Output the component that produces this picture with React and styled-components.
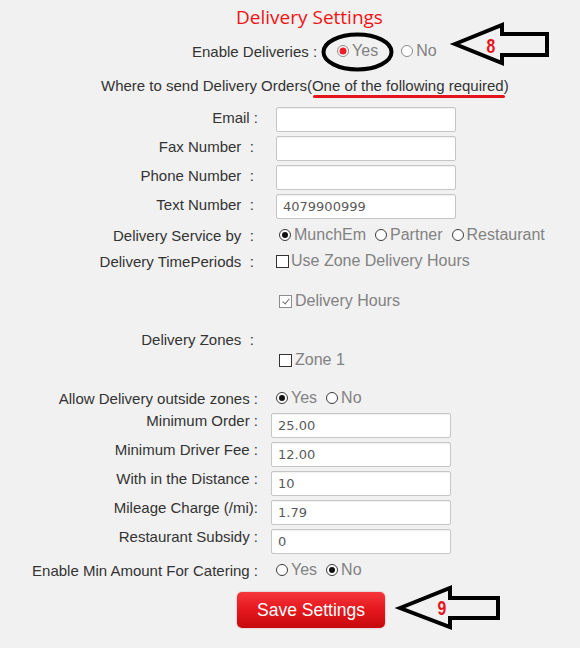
import React from "react";
import styled, { createGlobalStyle } from "styled-components";

const Global = createGlobalStyle`
  html, body { margin: 0; padding: 0; background: #f1f1f1; }
  body { font-family: "Liberation Sans", Arial, sans-serif; }
`;

const Page = styled.div`
  position: relative;
  width: 580px;
  height: 648px;
  background: #f1f1f1;
  color: #333;
  font-size: 15px;
  overflow: hidden;
`;

const Title = styled.h1`
  margin: 0;
  height: 34px;
  line-height: 34px;
  padding-left: 39px;
  text-align: center;
  font-family: "Open Sans", "Noto Sans", sans-serif;
  font-weight: 400;
  font-size: 19px;
  color: #ee1414;
`;

const Line = styled.div`
  display: flex;
  align-items: center;
  height: 34px;
  padding-left: ${(p) => p.$indent}px;
  white-space: pre;
`;

const Required = styled.span`
  position: relative;
  &::after {
    content: "";
    position: absolute;
    left: 1px;
    right: -1px;
    bottom: -4px;
    height: 3px;
    border-radius: 2px;
    background: #e3141d;
  }
`;

const Rows = styled.div`
  margin-top: 3px;
`;

const Row = styled.div`
  display: flex;
  align-items: center;
  height: ${(p) => p.$h}px;
  margin-top: ${(p) => p.$mt || 0}px;
`;

const Label = styled.div`
  flex: none;
  width: 258px;
  text-align: right;
  white-space: pre;
  color: #333;
  margin-bottom: ${(p) => (p.$lift || 0) * 2}px;
`;

const Value = styled.div`
  display: flex;
  align-items: center;
  margin-left: ${(p) => p.$gap}px;
`;

const Field = styled.input`
  box-sizing: border-box;
  width: 180px;
  height: 25px;
  margin: 0;
  padding: 0 6px;
  border: 1px solid #c6c6c6;
  border-radius: 2px;
  background: #fff;
  box-shadow: inset 0 1px 1px rgba(0, 0, 0, 0.06);
  font-family: "DejaVu Sans", Verdana, sans-serif;
  font-size: 13px;
  color: #5a5a5a;
  outline: none;
`;

const Opt = styled.label`
  display: inline-flex;
  align-items: center;
  margin-right: ${(p) => p.$space || 0}px;
  font-size: 16px;
  color: #828282;
  white-space: nowrap;
`;

const Radio = styled.span`
  position: relative;
  box-sizing: border-box;
  flex: none;
  width: 12px;
  height: 12px;
  margin-right: 3px;
  border-radius: 50%;
  border: 1px solid ${(p) => (p.$red ? "#8a8a8a" : "#3a3a3a")};
  background: #fff;
  &::after {
    content: "";
    display: ${(p) => (p.$on ? "block" : "none")};
    position: absolute;
    left: 50%;
    top: 50%;
    width: ${(p) => (p.$red ? 7 : 6)}px;
    height: ${(p) => (p.$red ? 7 : 6)}px;
    transform: translate(-50%, -50%);
    border-radius: 50%;
    background: ${(p) => (p.$red ? "#ec1c24" : "#111")};
  }
`;

const Check = styled.span`
  position: relative;
  box-sizing: border-box;
  flex: none;
  width: 13px;
  height: 13px;
  margin-right: ${(p) => p.$mr || 2}px;
  border: 1px solid ${(p) => (p.$on ? "#8c8c8c" : "#333")};
  background: #fff;
  &::after {
    content: "";
    display: ${(p) => (p.$on ? "block" : "none")};
    position: absolute;
    left: 3.5px;
    top: 1px;
    width: 3px;
    height: 6px;
    border-right: 1.3px solid #6d6d6d;
    border-bottom: 1.3px solid #6d6d6d;
    transform: rotate(40deg);
  }
`;

const ButtonRow = styled.div`
  display: flex;
  padding-left: 237px;
  margin-top: 8px;
`;

const SaveButton = styled.button`
  width: 148px;
  height: 36px;
  border: none;
  border-radius: 5px;
  background: linear-gradient(#f5363c 0%, #e4171d 50%, #c60a0b 100%);
  box-shadow: 0 0 2px rgba(150, 0, 0, 0.35);
  color: #fff;
  font-family: "Liberation Sans", Arial, sans-serif;
  font-size: 17.5px;
  cursor: pointer;
`;

const Overlay = styled.svg`
  position: absolute;
  left: 0;
  top: 0;
  pointer-events: none;
  overflow: visible;
`;

const Num = styled.text`
  font-family: "Liberation Sans", Arial, sans-serif;
  font-weight: 700;
  font-size: 21px;
  fill: #e8141c;
`;

const fields1 = [
  { label: "Email :", value: "" },
  { label: "Fax Number  : ", value: "" },
  { label: "Phone Number  : ", value: "" },
  { label: "Text Number  : ", value: "4079900999" },
];

const fields2 = [
  { label: "Minimum Order :", value: "25.00" },
  { label: "Minimum Driver Fee :", value: "12.00" },
  { label: "With in the Distance :", value: "10" },
  { label: "Mileage Charge (/mi):", value: "1.79" },
  { label: "Restaurant Subsidy :", value: "0" },
];

export default function App() {
  return (
    <Page>
      <Global />
      <Title>Delivery Settings</Title>
      <Line $indent={192}>
        <span>Enable Deliveries :</span>
        <Value $gap={20}>
          <Opt $space={23}>
            <Radio $on $red />
            Yes
          </Opt>
          <Opt>
            <Radio $red />
            No
          </Opt>
        </Value>
      </Line>
      <Line $indent={101}>
        <span>
          Where to send Delivery Orders(<Required>One of the following required</Required>)
        </span>
      </Line>

      <Rows>
        {fields1.map((f) => (
          <Row key={f.label} $h={29}>
            <Label $lift={2}>{f.label}</Label>
            <Value $gap={18}>
              <Field defaultValue={f.value} />
            </Value>
          </Row>
        ))}

        <Row $h={28}>
          <Label>{"Delivery Service by  : "}</Label>
          <Value $gap={21}>
            <Opt $space={9}>
              <Radio $on />
              MunchEm
            </Opt>
            <Opt $space={9}>
              <Radio />
              Partner
            </Opt>
            <Opt>
              <Radio />
              Restaurant
            </Opt>
          </Value>
        </Row>

        <Row $h={24}>
          <Label>{"Delivery TimePeriods  : "}</Label>
          <Value $gap={18}>
            <Opt>
              <Check />
              Use Zone Delivery Hours
            </Opt>
          </Value>
        </Row>

        <Row $h={56}>
          <Label />
          <Value $gap={21}>
            <Opt>
              <Check $on $mr={3} />
              Delivery Hours
            </Opt>
          </Value>
        </Row>

        <Row $h={20}>
          <Label>{"Delivery Zones  : "}</Label>
        </Row>

        <Row $h={22}>
          <Label />
          <Value $gap={21}>
            <Opt>
              <Check $mr={3} />
              Zone 1
            </Opt>
          </Value>
        </Row>

        <Row $h={26} $mt={14}>
          <Label>Allow Delivery outside zones :</Label>
          <Value $gap={18}>
            <Opt $space={9}>
              <Radio $on />
              Yes
            </Opt>
            <Opt>
              <Radio />
              No
            </Opt>
          </Value>
        </Row>

        {fields2.map((f) => (
          <Row key={f.label} $h={29}>
            <Label $lift={5}>{f.label}</Label>
            <Value $gap={13}>
              <Field defaultValue={f.value} />
            </Value>
          </Row>
        ))}

        <Row $h={28}>
          <Label>Enable Min Amount For Catering :</Label>
          <Value $gap={18}>
            <Opt $space={9}>
              <Radio />
              Yes
            </Opt>
            <Opt>
              <Radio $on />
              No
            </Opt>
          </Value>
        </Row>
      </Rows>

      <ButtonRow>
        <SaveButton type="button">Save Settings</SaveButton>
      </ButtonRow>

      <Overlay width="580" height="648" viewBox="0 0 580 648">
        <ellipse cx="357.5" cy="52" rx="34" ry="17.5" fill="none" stroke="#000" strokeWidth="4" />
        <polygon
          points="455,44 502,25 502,34 547,34 547,55 502,55 502,63"
          fill="none"
          stroke="#000"
          strokeWidth="4"
          strokeLinejoin="miter"
        />
        <Num x="491" y="53" textAnchor="middle" transform="translate(491 0) scale(0.75 1) translate(-491 0)">
          8
        </Num>
        <polygon
          points="400,608 450,588 450,598 498,598 498,618 450,618 450,627"
          fill="none"
          stroke="#000"
          strokeWidth="4"
          strokeLinejoin="miter"
        />
        <Num x="442" y="615" textAnchor="middle" transform="translate(442 0) scale(0.75 1) translate(-442 0)">
          9
        </Num>
      </Overlay>
    </Page>
  );
}
